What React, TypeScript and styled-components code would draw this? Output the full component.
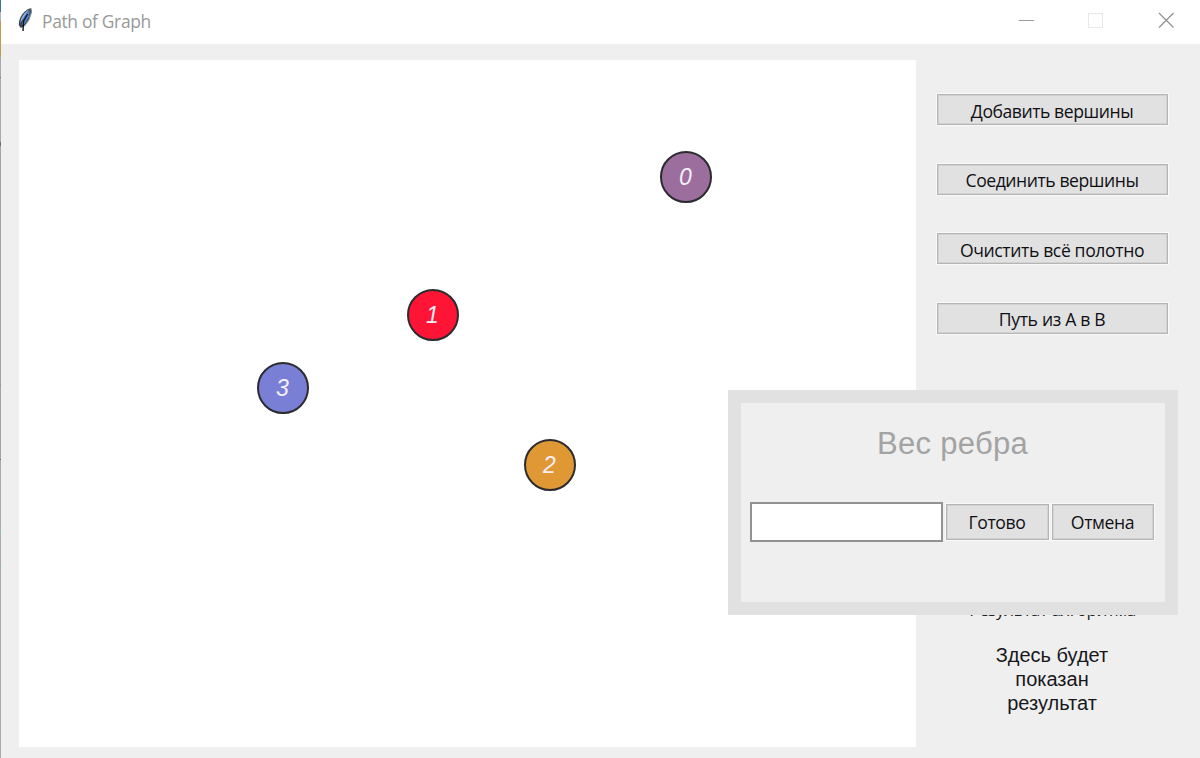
import React from "react";
import styled, { createGlobalStyle } from "styled-components";

const GlobalStyle = createGlobalStyle`
  * { box-sizing: border-box; }
  html, body { margin: 0; padding: 0; overflow: hidden; background: #efefef; }
`;

const UI_FONT = '"Open Sans", "Noto Sans", sans-serif';
const TK_FONT = '"Liberation Sans", Arial, sans-serif';

const Screen = styled.div`
  position: relative;
  display: flex;
  width: 1200px;
  height: 758px;
  overflow: hidden;
`;

const DesktopEdge = styled.div`
  width: 1px;
  height: 758px;
  background: linear-gradient(
    #3f6fb0 0 12px, #b5b5bb 12px 21px, #bd9c52 21px 57px, #a9a9ad 57px 77px,
    #77777b 77px 78px, #a9a9ad 78px 142px, #6d6d72 142px 146px, #a3a3a8 146px 384px,
    #7fa3a8 384px 386px, #a3a3a8 386px 459px, #66666a 459px 460px, #a9a9a9 460px 530px,
    #8dbdb8 530px 533px, #a9a9a9 533px 566px, #86b3bc 566px 568px, #a9a9a9 568px 758px
  );
`;

const Window = styled.main`
  flex: 1;
  display: flex;
  flex-direction: column;
  background: #efefef;
`;

const TitleBar = styled.header`
  display: flex;
  align-items: flex-start;
  height: 44px;
  padding-left: 15px;
  background: #fff;
`;

const Feather = styled.svg`
  width: 18px;
  height: 26px;
  margin-top: 7px;
`;

const Title = styled.h1`
  flex: 1;
  margin: 9px 0 0 8px;
  font: 400 17.4px/25px ${UI_FONT};
  letter-spacing: -0.32px;
  color: #999;
`;

const WindowControls = styled.div`
  display: flex;
  gap: 54px;
  margin: 12px 26px 0 0;
  svg { width: 16px; height: 17px; display: block; }
`;

const Body = styled.div`
  display: flex;
  flex: 1;
  padding: 16px 0 11px 18px;
`;

const GraphCanvas = styled.section`
  position: relative;
  width: 897px;
  height: 687px;
  background: #fff;
`;

const Vertex = styled.div<{ $x: number; $y: number; $color: string }>`
  position: absolute;
  left: ${(p) => p.$x}px;
  top: ${(p) => p.$y}px;
  display: flex;
  align-items: center;
  justify-content: center;
  width: 52px;
  height: 52px;
  border: 2px solid #2b2b30;
  border-radius: 50%;
  background: ${(p) => p.$color};
  color: #f4eef6;
  font: italic 400 23px/26px ${TK_FONT};
`;

const Sidebar = styled.aside`
  display: flex;
  flex-direction: column;
  align-items: center;
  width: 284px;
  padding: 33px 11px 0 0;
`;

const ButtonStack = styled.nav`
  display: flex;
  flex-direction: column;
  gap: 36.5px;
  width: 233px;
`;

const Button = styled.button<{ $width: number; $height: number; $spacing?: number }>`
  display: flex;
  flex-shrink: 0;
  align-items: center;
  justify-content: center;
  width: ${(p) => p.$width}px;
  height: ${(p) => p.$height}px;
  padding: 2px 1px 0 0;
  border: 1px solid #fafafa;
  box-shadow: inset 0 0 0 1px #b5b5b5, inset 0 0 0 2px #d2d2d2;
  background: #e1e1e1;
  color: #101014;
  font: 400 17.6px/24px ${UI_FONT};
  letter-spacing: ${(p) => p.$spacing ?? 0}px;
  white-space: nowrap;
`;

const ResultTitle = styled.h2`
  margin: 264px 0 0;
  font: 400 17.2px/22px ${UI_FONT};
  letter-spacing: -0.5px;
  color: #222;
  white-space: nowrap;
`;

const Result = styled.p`
  width: 130px;
  margin: 22px 1px 0 0;
  text-align: center;
  font: 400 20px/24px ${TK_FONT};
  color: #18181c;
`;

const Dialog = styled.form`
  position: absolute;
  left: 728px;
  top: 390px;
  display: flex;
  flex-direction: column;
  width: 450px;
  height: 225px;
  border: 13px solid #e1e1e1;
  background: #efefef;
`;

const DialogTitle = styled.h2`
  margin: 23px 1px 0 0;
  text-align: center;
  font: 400 31px/36px ${TK_FONT};
  letter-spacing: 0.3px;
  color: #a3a3a3;
`;

const DialogRow = styled.div`
  display: flex;
  align-items: center;
  margin: 40px 0 0 9px;

  button { padding-top: 0; }
  button + button { margin-left: 1px; }
`;

const WeightInput = styled.input`
  width: 193px;
  height: 40px;
  margin-right: 2px;
  padding: 0 6px;
  border: 2px solid #929292;
  background: #fff;
  font: 400 20px ${TK_FONT};
`;

const actions = [
  { label: "Добавить вершины", spacing: -0.45 },
  { label: "Соединить вершины", spacing: -0.45 },
  { label: "Очистить всё полотно", spacing: -0.38 },
  { label: "Путь из A в B", spacing: -0.32 },
];

const vertices = [
  { id: 0, x: 640.5, y: 90.5, color: "#9c6e9e" },
  { id: 1, x: 387.5, y: 228.5, color: "#fe1434" },
  { id: 2, x: 504.5, y: 378.5, color: "#df9834" },
  { id: 3, x: 237.5, y: 302, color: "#797fd5" },
];

export default function App() {
  return (
    <Screen>
      <GlobalStyle />
      <DesktopEdge />
      <Window>
        <TitleBar>
          <Feather viewBox="0 0 18 26">
            <path d="M15 1.2C9.5 2 4.2 8.4 3 14.5l-.2 3.4 2 3 3.4-1.6 4.2-5.6L15.6 5z" fill="#39434f" />
            <path d="M13.2 2.6C8.8 4.6 4.8 10.4 4.2 16.2l3-4.8z" fill="#8eb5e8" />
            <path d="M13.8 3 13.2 9.6 8.4 17.5 5.6 18 8.4 9z" fill="#4b84cc" />
            <path d="M15 1.3 15.5 5.2 13.2 12.3 8.6 19" fill="none" stroke="#8a8f92" strokeWidth="1.1" />
            <path d="M11.6 7 7.6 14 7 24" fill="none" stroke="#101419" strokeWidth="1.4" />
          </Feather>
          <Title>Path of Graph</Title>
          <WindowControls>
            <svg viewBox="0 0 16 17"><path d="M1 8.5H16" stroke="#999" /></svg>
            <svg viewBox="0 0 16 17"><rect x="0.5" y="1.5" width="14" height="14" fill="none" stroke="#e8e8e8" /></svg>
            <svg viewBox="0 0 16 17"><path d="M1 1 15.5 15.5M15.5 1 1 15.5" stroke="#8c8c8c" strokeWidth="1.1" /></svg>
          </WindowControls>
        </TitleBar>
        <Body>
          <GraphCanvas>
            {vertices.map((v) => (
              <Vertex key={v.id} $x={v.x} $y={v.y} $color={v.color}>{v.id}</Vertex>
            ))}
          </GraphCanvas>
          <Sidebar>
            <ButtonStack>
              {actions.map((a) => (
                <Button key={a.label} $width={233} $height={33} $spacing={a.spacing}>{a.label}</Button>
              ))}
            </ButtonStack>
            <ResultTitle>Результат алгоритма</ResultTitle>
            <Result>Здесь будет показан результат</Result>
          </Sidebar>
        </Body>
      </Window>
      <Dialog>
        <DialogTitle>Вес ребра</DialogTitle>
        <DialogRow>
          <WeightInput aria-label="Вес ребра" />
          <Button type="button" $width={105} $height={38} $spacing={-0.4}>Готово</Button>
          <Button type="button" $width={104} $height={38} $spacing={-0.4}>Отмена</Button>
        </DialogRow>
      </Dialog>
    </Screen>
  );
}
